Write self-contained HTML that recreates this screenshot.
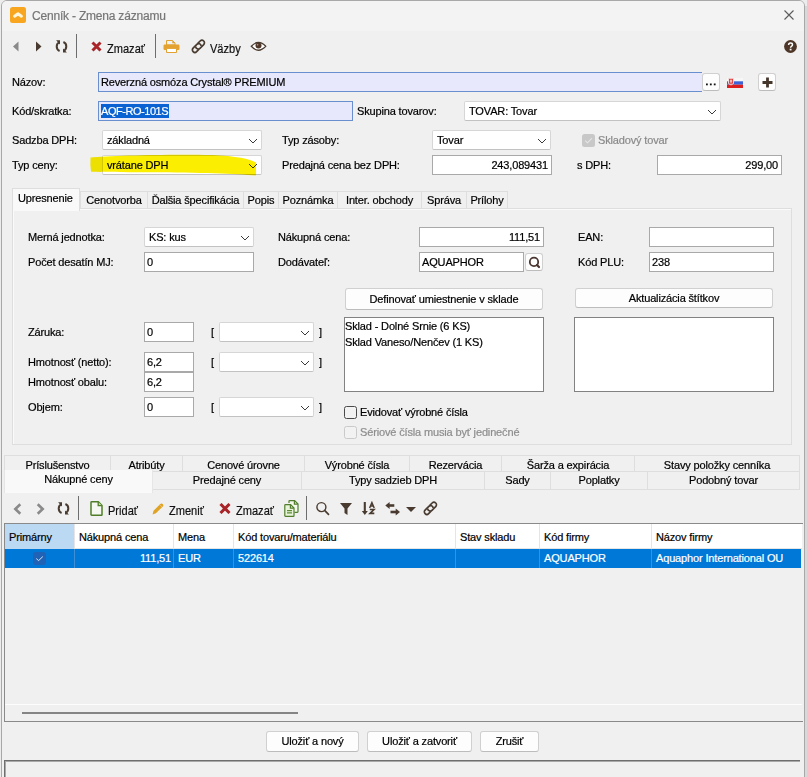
<!DOCTYPE html>
<html><head><meta charset="utf-8">
<style>
*{box-sizing:border-box;margin:0;padding:0}
html,body{width:807px;height:777px;overflow:hidden;background:#ececec}
body{position:relative;font-family:"Liberation Sans",sans-serif;font-size:11px;letter-spacing:-0.15px;color:#000;-webkit-text-stroke:0.2px currentColor}
.a{position:absolute}
.t{position:absolute;white-space:nowrap;line-height:13px}
.win{position:absolute;left:1px;top:0;width:804px;height:790px;background:#f0f0f0;border:1px solid #a8a8a8;border-radius:6px 6px 0 0;overflow:hidden}
.tbar{position:absolute;left:0;top:0;width:802px;height:30px;background:#f3f3f3}
.inp{position:absolute;background:#fff;border:1px solid #a9a9a9}
.cmb{position:absolute;background:#fff;border:1px solid #d6d6d6;border-bottom-color:#c2c2c2;border-radius:2px}
.cmb .t{left:4px;top:3px}
.chev{position:absolute;right:3px;top:6.5px}
.btn{position:absolute;background:#fdfdfd;border:1px solid #d0d0d0;border-bottom-color:#bcbcbc;border-radius:3px;text-align:center}
.tt{position:absolute;white-space:nowrap;line-height:13px;font-size:13px;letter-spacing:0;color:#111;transform:scaleX(0.85);transform-origin:0 0}
.sep{position:absolute;width:1px;background:#6d6d6d}
</style></head><body>
<div class="a" style="left:805px;top:6px;width:2px;height:771px;background:#d8d8d8"></div><div class="win"><div class="tbar"></div></div>

<!-- title -->
<div class="a" style="left:10px;top:7px;width:16px;height:16px;background:#f8a51f;border-radius:2.5px"></div>
<svg class="a" style="left:10px;top:7px" width="16" height="16"><path d="M4.6 9.2 L8 6.8 L11.4 9.2" fill="none" stroke="#fff7dc" stroke-width="3" stroke-linecap="round" stroke-linejoin="round"/></svg>
<div class="t" style="left:32px;top:10px;font-size:12px;letter-spacing:-0.2px;color:#767676">Cenník - Zmena záznamu</div>
<svg class="a" style="left:784px;top:10px" width="10" height="10"><path d="M0.5 0.5 L9.5 9.5 M9.5 0.5 L0.5 9.5" stroke="#5a5a5a" stroke-width="1.1"/></svg>

<!-- toolbar -->
<svg class="a" style="left:12px;top:41px" width="8" height="11"><path d="M6.5 0.5 L1 5.5 L6.5 10.5 Z" fill="#8a8a8a"/></svg>
<svg class="a" style="left:35px;top:41px" width="8" height="11"><path d="M1 0.5 L6.5 5.5 L1 10.5 Z" fill="#4a3b30"/></svg>
<svg class="a" style="left:55px;top:40px" width="13" height="13" viewBox="0 0 13 13"><g fill="none" stroke="#4a3b30" stroke-width="2"><path d="M4.6 2.2 A4.8 4.8 0 0 0 4.6 11"/><path d="M8.4 2 A4.8 4.8 0 0 1 8.4 10.8"/></g><path d="M1.1 0.2 H5 V4.4 Z M11.9 12.6 H8 V8.4 Z" fill="#4a3b30"/></svg>
<div class="sep" style="left:76px;top:34px;height:24px"></div>
<svg class="a" style="left:91px;top:41px" width="11" height="11"><path d="M1.5 1.5 L9.5 9.5 M9.5 1.5 L1.5 9.5" stroke="#a82428" stroke-width="3"/></svg>
<div class="tt" style="left:107px;top:41.7px">Zmazať</div>
<div class="sep" style="left:155px;top:34px;height:24px"></div>
<svg class="a" style="left:163px;top:39px" width="17" height="14"><path d="M3.5 1.5 H9.5 L12 4 V6 H3.5 Z" fill="#eef2f6" stroke="#e3a130" stroke-width="1"/><path d="M9.3 1.3 V4.2 H12.2Z" fill="#e3a130"/><rect x="0.5" y="5.6" width="16" height="5.4" rx="1.2" fill="#e3a130"/><path d="M3.5 9.4 H13.5 V13.5 H3.5 Z" fill="#fff" stroke="#e3a130" stroke-width="1"/></svg>
<svg class="a" style="left:190px;top:38px" width="17" height="17"><g fill="none" stroke="#4a3b30" stroke-width="1.7" stroke-linecap="butt" transform="translate(8.4 8.3) rotate(-45)"><path d="M1.6 -2.5 H5.0 A2.5 2.5 0 0 1 5.0 2.5 H-0.3 A2.5 2.5 0 0 1 -2.07 -1.77"/><path d="M-1.6 2.5 H-5.0 A2.5 2.5 0 0 1 -5.0 -2.5 H0.3 A2.5 2.5 0 0 1 2.07 1.77"/></g></svg>
<div class="tt" style="left:210px;top:41.7px">Väzby</div>
<svg class="a" style="left:250px;top:41px" width="17" height="11"><path d="M1.3 5.3 Q8.5 -2.6 15.7 5.3 Q8.5 13.2 1.3 5.3Z" fill="#fff" stroke="#4a3b30" stroke-width="1.3"/><circle cx="8.5" cy="4.6" r="3" fill="#4e3628"/><circle cx="7.6" cy="3.7" r="0.8" fill="#b49a88"/></svg>
<svg class="a" style="left:784px;top:40px" width="13" height="13"><circle cx="6.5" cy="6.5" r="6.4" fill="#4d3627"/><path d="M4.6 4.9 Q4.6 3 6.6 3 Q8.5 3 8.5 4.7 Q8.5 5.7 7.4 6.3 Q6.6 6.8 6.6 7.8" fill="none" stroke="#fff" stroke-width="1.5"/><rect x="5.7" y="8.7" width="1.8" height="1.7" fill="#fff"/></svg>

<!-- top form -->
<div class="t" style="left:12px;top:76px">Názov:</div>
<div class="a" style="left:98px;top:72px;width:604px;height:20px;background:#e8e8fc;border:1px solid #6a8fcf;border-right:none"></div>
<div class="t" style="left:101px;top:76px">Reverzná osmóza Crystal® PREMIUM</div>
<div class="btn" style="left:702px;top:73px;width:18px;height:18px"></div><svg class="a" style="left:705px;top:83px" width="12" height="3"><rect x="1" y="0.5" width="1.8" height="1.8" fill="#111"/><rect x="4.9" y="0.5" width="1.8" height="1.8" fill="#111"/><rect x="8.8" y="0.5" width="1.8" height="1.8" fill="#111"/></svg>
<svg class="a" style="left:727px;top:78px" width="16" height="10"><rect x="0" y="0" width="16" height="3.3" fill="#f6f6f6"/><rect x="0" y="3.3" width="16" height="3.4" fill="#3d62d8"/><rect x="0" y="6.7" width="16" height="3.3" fill="#dd1e1e"/><path d="M1.5 0.3 H6.5 V5.5 Q4 8.5 1.5 5.5Z" fill="#e23a3a" stroke="#f4e8e8" stroke-width="0.9"/><path d="M4 1.5 V5.5 M2.8 3 H5.2" stroke="#fff" stroke-width="0.8"/></svg>
<div class="btn" style="left:758px;top:73px;width:18px;height:18px"></div>
<svg class="a" style="left:762px;top:77px" width="11" height="11"><path d="M5.5 0.5 V10.5 M0.5 5.5 H10.5" stroke="#45362b" stroke-width="2.8"/></svg>

<div class="t" style="left:12px;top:105px">Kód/skratka:</div>
<div class="a" style="left:98px;top:101px;width:255px;height:20px;background:#e8e8fc;border:1px solid #6a8fcf"></div>
<div class="a" style="left:101px;top:104px;width:68px;height:14px;background:#0a62d2"></div>
<div class="t" style="left:101px;top:105px;color:#fff;letter-spacing:-0.45px">AQF-RO-101S</div>
<div class="t" style="left:357px;top:105px">Skupina tovarov:</div>
<div class="cmb" style="left:464px;top:101px;width:257px;height:20px"><div class="t">TOVAR: Tovar</div><svg class="chev" width="10" height="6"><path d="M1 1 L5 5 L9 1" fill="none" stroke="#3a3a3a" stroke-width="1"/></svg></div>

<div class="t" style="left:12px;top:134px">Sadzba DPH:</div>
<div class="cmb" style="left:102px;top:130px;width:160px;height:20px"><div class="t">základná</div><svg class="chev" width="10" height="6"><path d="M1 1 L5 5 L9 1" fill="none" stroke="#3a3a3a" stroke-width="1"/></svg></div>
<div class="t" style="left:282px;top:134px">Typ zásoby:</div>
<div class="cmb" style="left:432px;top:130px;width:119px;height:20px"><div class="t">Tovar</div><svg class="chev" width="10" height="6"><path d="M1 1 L5 5 L9 1" fill="none" stroke="#3a3a3a" stroke-width="1"/></svg></div>
<div class="a" style="left:582px;top:134px;width:13px;height:13px;background:#c8c8c8;border-radius:2.5px"></div>
<svg class="a" style="left:582px;top:134px" width="13" height="13"><path d="M3.2 6.6 L5.5 8.8 L9.8 4.3" fill="none" stroke="#e6e6e6" stroke-width="1.1"/></svg>
<div class="t" style="left:598px;top:134px;color:#8a8a8a">Skladový tovar</div>

<div class="t" style="left:12px;top:159px">Typ ceny:</div>
<div class="cmb" style="left:102px;top:155px;width:160px;height:20px"><div class="t">vrátane DPH</div><svg class="chev" width="10" height="6"><path d="M1 1 L5 5 L9 1" fill="none" stroke="#3a3a3a" stroke-width="1"/></svg></div>
<svg class="a" style="left:0;top:0;mix-blend-mode:multiply" width="300" height="200"><path d="M90.5 157.5 C110 155.5 170 154 212 155 C236 156 250 159 256 162.5 L256 175.5 C236 174 200 172.5 150 172.3 C120 172.2 100 172 91 171.8 Q90 165 90.5 157.5 Z" fill="#fbee00"/></svg>
<div class="t" style="left:282px;top:159px">Predajná cena bez DPH:</div>
<div class="inp" style="left:432px;top:155px;width:120px;height:20px"></div>
<div class="t" style="left:432px;top:159px;width:116px;text-align:right">243,089431</div>
<div class="t" style="left:577px;top:159px">s DPH:</div>
<div class="inp" style="left:657px;top:155px;width:125px;height:20px"></div>
<div class="t" style="left:657px;top:159px;width:121px;text-align:right">299,00</div>

<!-- tabs -->
<div class="a" style="left:12px;top:208px;width:780px;height:237px;border:1px solid #dedede;background:#f0f0f0;box-shadow:inset 1px 1px 0 #fafafa"></div>
<div class="a" style="left:80px;top:191px;width:68px;height:18px;border:1px solid #dedede;background:#f0f0f0"></div>
<div class="t" style="left:80px;top:193.7px;width:68px;text-align:center">Cenotvorba</div>
<div class="a" style="left:147px;top:191px;width:97px;height:18px;border:1px solid #dedede;background:#f0f0f0"></div>
<div class="t" style="left:147px;top:193.7px;width:97px;text-align:center">Ďalšia špecifikácia</div>
<div class="a" style="left:243px;top:191px;width:36px;height:18px;border:1px solid #dedede;background:#f0f0f0"></div>
<div class="t" style="left:243px;top:193.7px;width:36px;text-align:center">Popis</div>
<div class="a" style="left:278px;top:191px;width:60px;height:18px;border:1px solid #dedede;background:#f0f0f0"></div>
<div class="t" style="left:278px;top:193.7px;width:60px;text-align:center">Poznámka</div>
<div class="a" style="left:337px;top:191px;width:85px;height:18px;border:1px solid #dedede;background:#f0f0f0"></div>
<div class="t" style="left:337px;top:193.7px;width:85px;text-align:center">Inter. obchody</div>
<div class="a" style="left:421px;top:191px;width:46px;height:18px;border:1px solid #dedede;background:#f0f0f0"></div>
<div class="t" style="left:421px;top:193.7px;width:46px;text-align:center">Správa</div>
<div class="a" style="left:466px;top:191px;width:42px;height:18px;border:1px solid #dedede;background:#f0f0f0"></div>
<div class="t" style="left:466px;top:193.7px;width:42px;text-align:center">Prílohy</div>
<div class="a" style="left:12px;top:188px;width:68px;height:23px;border:1px solid #dedede;border-bottom:none;background:#f9f9f9"></div>
<div class="t" style="left:18px;top:191.7px;">Upresnenie</div>
<div class="t" style="left:28px;top:230.7px;">Merná jednotka:</div>
<div class="cmb" style="left:144px;top:227px;width:110px;height:20px"><div class="t">KS: kus</div><svg class="chev" width="10" height="6"><path d="M1 1 L5 5 L9 1" fill="none" stroke="#3a3a3a" stroke-width="1"/></svg></div>
<div class="t" style="left:28px;top:255.7px;">Počet desatín MJ:</div>
<div class="inp" style="left:144px;top:252px;width:110px;height:20px"></div>
<div class="t" style="left:147px;top:255.7px;">0</div>
<div class="t" style="left:278px;top:230.7px;">Nákupná cena:</div>
<div class="inp" style="left:419px;top:227px;width:125px;height:20px"></div>
<div class="t" style="left:419px;top:230.7px;width:121px;text-align:right">111,51</div>
<div class="t" style="left:278px;top:255.7px;">Dodávateľ:</div>
<div class="inp" style="left:419px;top:252px;width:105px;height:20px"></div>
<div class="t" style="left:422px;top:255.7px;">AQUAPHOR</div>
<div class="btn" style="left:525px;top:253px;width:18px;height:18px"></div>
<svg class="a" style="left:528px;top:256px" width="13" height="13"><circle cx="6" cy="5.9" r="4.2" fill="none" stroke="#4a3630" stroke-width="1.8"/><path d="M9 9 L11 11" stroke="#4a3630" stroke-width="2.2" stroke-linecap="round"/></svg>
<div class="t" style="left:578px;top:230.7px;">EAN:</div>
<div class="inp" style="left:649px;top:227px;width:125px;height:20px"></div>
<div class="t" style="left:578px;top:255.7px;">Kód PLU:</div>
<div class="inp" style="left:649px;top:252px;width:125px;height:20px"></div>
<div class="t" style="left:652px;top:255.7px;">238</div>
<div class="btn" style="left:345px;top:288px;width:198px;height:22px"></div>
<div class="t" style="left:345px;top:292.7px;width:198px;text-align:center">Definovať umiestnenie v sklade</div>
<div class="btn" style="left:575px;top:288px;width:198px;height:20px"></div>
<div class="t" style="left:575px;top:291.7px;width:198px;text-align:center">Aktualizácia štítkov</div>
<div class="inp" style="left:344px;top:317px;width:200px;height:75px;border-color:#828282"></div>
<div class="t" style="left:345px;top:319.7px;">Sklad - Dolné Srnie (6 KS)</div>
<div class="t" style="left:345px;top:335.7px;">Sklad Vaneso/Nenčev (1 KS)</div>
<div class="inp" style="left:574px;top:317px;width:200px;height:75px;border-color:#828282"></div>
<div class="t" style="left:28px;top:325.7px;">Záruka:</div>
<div class="inp" style="left:144px;top:322px;width:50px;height:20px"></div>
<div class="t" style="left:147px;top:325.7px;">0</div>
<div class="t" style="left:211px;top:325.7px;">[</div>
<div class="cmb" style="left:219px;top:322px;width:95px;height:20px"><svg class="chev" width="10" height="6"><path d="M1 1 L5 5 L9 1" fill="none" stroke="#3a3a3a" stroke-width="1"/></svg></div>
<div class="t" style="left:319px;top:325.7px;">]</div>
<div class="t" style="left:28px;top:355.7px;">Hmotnosť (netto):</div>
<div class="inp" style="left:144px;top:352px;width:50px;height:20px"></div>
<div class="t" style="left:147px;top:355.7px;">6,2</div>
<div class="t" style="left:211px;top:355.7px;">[</div>
<div class="cmb" style="left:219px;top:352px;width:95px;height:20px"><svg class="chev" width="10" height="6"><path d="M1 1 L5 5 L9 1" fill="none" stroke="#3a3a3a" stroke-width="1"/></svg></div>
<div class="t" style="left:319px;top:355.7px;">]</div>
<div class="t" style="left:28px;top:375.7px;">Hmotnosť obalu:</div>
<div class="inp" style="left:144px;top:372px;width:50px;height:20px"></div>
<div class="t" style="left:147px;top:375.7px;">6,2</div>
<div class="t" style="left:28px;top:400.7px;">Objem:</div>
<div class="inp" style="left:144px;top:397px;width:50px;height:20px"></div>
<div class="t" style="left:147px;top:400.7px;">0</div>
<div class="t" style="left:211px;top:400.7px;">[</div>
<div class="cmb" style="left:219px;top:397px;width:95px;height:20px"><svg class="chev" width="10" height="6"><path d="M1 1 L5 5 L9 1" fill="none" stroke="#3a3a3a" stroke-width="1"/></svg></div>
<div class="t" style="left:319px;top:400.7px;">]</div>
<div class="a" style="left:344px;top:406px;width:13px;height:13px;border:1px solid #4a4a4a;border-radius:2.5px;background:#f2f2f2"></div>
<div class="t" style="left:360px;top:405.7px;">Evidovať výrobné čísla</div>
<div class="a" style="left:344px;top:426px;width:13px;height:13px;border:1px solid #cacaca;border-radius:2.5px;background:#f2f2f2"></div>
<div class="t" style="left:360px;top:425.7px;color:#8d8d8d">Sériové čísla musia byť jedinečné</div>
<!-- lower tabs -->
<div class="a" style="left:4px;top:455px;width:107px;height:17px;border:1px solid #dedede;border-bottom:none;background:#f0f0f0"></div>
<div class="t" style="left:4px;top:459.2px;width:107px;text-align:center">Príslušenstvo</div>
<div class="a" style="left:110px;top:455px;width:73px;height:17px;border:1px solid #dedede;border-bottom:none;background:#f0f0f0"></div>
<div class="t" style="left:110px;top:459.2px;width:73px;text-align:center">Atribúty</div>
<div class="a" style="left:182px;top:455px;width:123px;height:17px;border:1px solid #dedede;border-bottom:none;background:#f0f0f0"></div>
<div class="t" style="left:182px;top:459.2px;width:123px;text-align:center">Cenové úrovne</div>
<div class="a" style="left:304px;top:455px;width:106px;height:17px;border:1px solid #dedede;border-bottom:none;background:#f0f0f0"></div>
<div class="t" style="left:304px;top:459.2px;width:106px;text-align:center">Výrobné čísla</div>
<div class="a" style="left:409px;top:455px;width:93px;height:17px;border:1px solid #dedede;border-bottom:none;background:#f0f0f0"></div>
<div class="t" style="left:409px;top:459.2px;width:93px;text-align:center">Rezervácia</div>
<div class="a" style="left:501px;top:455px;width:134px;height:17px;border:1px solid #dedede;border-bottom:none;background:#f0f0f0"></div>
<div class="t" style="left:501px;top:459.2px;width:134px;text-align:center">Šarža a expirácia</div>
<div class="a" style="left:634px;top:455px;width:166px;height:17px;border:1px solid #dedede;border-bottom:none;background:#f0f0f0"></div>
<div class="t" style="left:634px;top:459.2px;width:166px;text-align:center">Stavy položky cenníka</div>
<div class="a" style="left:152px;top:471px;width:150px;height:19px;border:1px solid #dedede;background:#f0f0f0"></div>
<div class="t" style="left:152px;top:473.7px;width:150px;text-align:center">Predajné ceny</div>
<div class="a" style="left:301px;top:471px;width:184px;height:19px;border:1px solid #dedede;background:#f0f0f0"></div>
<div class="t" style="left:301px;top:473.7px;width:184px;text-align:center">Typy sadzieb DPH</div>
<div class="a" style="left:484px;top:471px;width:67px;height:19px;border:1px solid #dedede;background:#f0f0f0"></div>
<div class="t" style="left:484px;top:473.7px;width:67px;text-align:center">Sady</div>
<div class="a" style="left:550px;top:471px;width:98px;height:19px;border:1px solid #dedede;background:#f0f0f0"></div>
<div class="t" style="left:550px;top:473.7px;width:98px;text-align:center">Poplatky</div>
<div class="a" style="left:647px;top:471px;width:153px;height:19px;border:1px solid #dedede;background:#f0f0f0"></div>
<div class="t" style="left:647px;top:473.7px;width:153px;text-align:center">Podobný tovar</div>
<div class="a" style="left:4px;top:470px;width:149px;height:23px;border:1px solid #e6e6e6;border-bottom:none;border-top:none;background:#f9f9f9"></div>
<div class="t" style="left:4px;top:472.7px;width:149px;text-align:center">Nákupné ceny</div>
<svg class="a" style="left:13px;top:503px" width="9" height="12"><path d="M7.3 1.2 L2.3 6 L7.3 10.8" fill="none" stroke="#8a8a8a" stroke-width="2.6"/></svg>
<svg class="a" style="left:36px;top:503px" width="9" height="12"><path d="M1.7 1.2 L6.7 6 L1.7 10.8" fill="none" stroke="#8a8a8a" stroke-width="2.6"/></svg>
<svg class="a" style="left:57px;top:502px" width="13" height="13" viewBox="0 0 13 13"><g fill="none" stroke="#4a3b30" stroke-width="2"><path d="M4.6 2.2 A4.8 4.8 0 0 0 4.6 11"/><path d="M8.4 2 A4.8 4.8 0 0 1 8.4 10.8"/></g><path d="M1.1 0.2 H5 V4.4 Z M11.9 12.6 H8 V8.4 Z" fill="#4a3b30"/></svg>
<div class="sep" style="left:78px;top:496px;height:24px"></div>
<svg class="a" style="left:90px;top:501px" width="13" height="15"><path d="M1.6 0.8 H8.3 L12 4.5 V13.7 Q12 14.2 11.5 14.2 H1.6 Q1 14.2 1 13.6 V1.4 Q1 0.8 1.6 0.8Z" fill="#f4f8f0" stroke="#4f7d28" stroke-width="1.5"/><path d="M8.2 1 V4.6 H11.8" fill="#c9e6a8" stroke="#4f7d28" stroke-width="1.3"/></svg>
<div class="tt" style="left:108px;top:503.8px">Pridať</div>
<svg class="a" style="left:152px;top:503px" width="12" height="12"><path d="M0.6 11.4 L1.5 7.8 L8.3 1 Q9.5 -0.1 10.7 1.1 Q11.9 2.3 10.8 3.5 L3.9 10.2 Z" fill="#e0a325"/><path d="M7.6 1.7 L10.1 4.2" stroke="#f6d58a" stroke-width="0.6"/></svg>
<div class="tt" style="left:169px;top:503.8px">Zmeniť</div>
<svg class="a" style="left:219px;top:503px" width="12" height="11"><path d="M1.5 1 L10.5 10 M10.5 1 L1.5 10" stroke="#a82428" stroke-width="3"/></svg>
<div class="tt" style="left:236px;top:503.8px">Zmazať</div>
<svg class="a" style="left:284px;top:500px" width="16" height="17"><path d="M5 3 V1.3 Q5 0.6 5.7 0.6 H10.6 L14 4 V11.6 Q14 12.3 13.3 12.3 H10.5" fill="#f2f8ea" stroke="#517d2c" stroke-width="1.2"/><path d="M10.4 0.8 V4.2 H13.8" fill="none" stroke="#517d2c" stroke-width="1.2"/><path d="M1.5 4.6 H6.6 L10 8 V15.7 Q10 16.3 9.3 16.3 H1.5 Q0.8 16.3 0.8 15.6 V5.3 Q0.8 4.6 1.5 4.6Z" fill="#e8f4da" stroke="#517d2c" stroke-width="1.2"/><path d="M6.4 4.8 V8.2 H9.8" fill="none" stroke="#517d2c" stroke-width="1.2"/><path d="M3 10.6 H8 M3 12.9 H8" stroke="#5d8a35" stroke-width="1.1"/></svg>
<div class="sep" style="left:306px;top:496px;height:24px"></div>
<svg class="a" style="left:315px;top:501px" width="15" height="15"><circle cx="6.4" cy="6.1" r="4.5" fill="none" stroke="#4a3b30" stroke-width="1.4"/><path d="M9.6 9.4 L13.5 13.3" stroke="#4a3b30" stroke-width="1.7" stroke-linecap="round"/></svg>
<svg class="a" style="left:339.5px;top:502.5px" width="12" height="12"><path d="M0 0 H12 L7.5 5.5 V12 L4.5 10 V5.5 Z" fill="#4a3b30"/></svg>
<svg class="a" style="left:361px;top:501px" width="15" height="15"><path d="M3.8 1 V11" stroke="#4a3b30" stroke-width="2.1"/><path d="M0.8 10 H6.8 L3.8 14Z" fill="#4a3b30"/><path d="M8.6 7 L10.9 1.6 L13.2 7 M9.5 5.1 H12.3" fill="none" stroke="#4a3b30" stroke-width="1.5"/><path d="M8.8 8.5 H13 L9 12.4 H13.3" fill="none" stroke="#4a3b30" stroke-width="1.6"/></svg>
<svg class="a" style="left:385px;top:502px" width="16" height="14"><path d="M3 3.5 H9.3" stroke="#4a3b30" stroke-width="2.6"/><path d="M0.3 3.5 L4.6 0 V7Z" fill="#4a3b30"/><path d="M5.5 10 H11.5" stroke="#4a3b30" stroke-width="2.6"/><path d="M15 10 L10.7 6.5 V13.5Z" fill="#4a3b30"/></svg>
<svg class="a" style="left:406px;top:507px" width="10" height="5"><path d="M0 0 H10 L5 5Z" fill="#4a3b30"/></svg>
<svg class="a" style="left:422px;top:500px" width="17" height="17"><g fill="none" stroke="#4a3b30" stroke-width="1.7" stroke-linecap="butt" transform="translate(8.4 8.3) rotate(-45)"><path d="M1.6 -2.5 H5.0 A2.5 2.5 0 0 1 5.0 2.5 H-0.3 A2.5 2.5 0 0 1 -2.07 -1.77"/><path d="M-1.6 2.5 H-5.0 A2.5 2.5 0 0 1 -5.0 -2.5 H0.3 A2.5 2.5 0 0 1 2.07 1.77"/></g></svg>
<div class="a" style="left:4px;top:523px;width:799px;height:199px;border:1px solid #8a8a8a;border-right:none;background:#f0f0f0"></div>
<div class="a" style="left:5px;top:524px;width:797px;height:25px;background:#fff;border-bottom:1px solid #e5e5e5"></div>
<div class="a" style="left:5px;top:524px;width:69px;height:25px;background:#bcd9f3"></div>
<div class="a" style="left:74px;top:524px;width:1px;height:25px;background:#e5e5e5"></div>
<div class="a" style="left:173px;top:524px;width:1px;height:25px;background:#e5e5e5"></div>
<div class="a" style="left:233px;top:524px;width:1px;height:25px;background:#e5e5e5"></div>
<div class="a" style="left:455px;top:524px;width:1px;height:25px;background:#e5e5e5"></div>
<div class="a" style="left:539px;top:524px;width:1px;height:25px;background:#e5e5e5"></div>
<div class="a" style="left:651px;top:524px;width:1px;height:25px;background:#e5e5e5"></div>
<div class="t" style="left:9px;top:530.7px;">Primárny</div>
<div class="t" style="left:79px;top:530.7px;">Nákupná cena</div>
<div class="t" style="left:178px;top:530.7px;">Mena</div>
<div class="t" style="left:238px;top:530.7px;">Kód tovaru/materiálu</div>
<div class="t" style="left:460px;top:530.7px;">Stav skladu</div>
<div class="t" style="left:544px;top:530.7px;">Kód firmy</div>
<div class="t" style="left:656px;top:530.7px;">Názov firmy</div>
<div class="a" style="left:5px;top:549px;width:796px;height:19px;background:#0078d7"></div>
<div class="a" style="left:74px;top:549px;width:1px;height:19px;background:#3d8fd6"></div>
<div class="a" style="left:173px;top:549px;width:1px;height:19px;background:#3d8fd6"></div>
<div class="a" style="left:233px;top:549px;width:1px;height:19px;background:#3d8fd6"></div>
<div class="a" style="left:455px;top:549px;width:1px;height:19px;background:#3d8fd6"></div>
<div class="a" style="left:539px;top:549px;width:1px;height:19px;background:#3d8fd6"></div>
<div class="a" style="left:651px;top:549px;width:1px;height:19px;background:#3d8fd6"></div>
<div class="a" style="left:33px;top:552px;width:13px;height:13px;background:#1f62b6;border-radius:3px"></div>
<svg class="a" style="left:33px;top:552px" width="13" height="13"><path d="M3.3 6.6 L5.6 8.6 L9.8 4.6" fill="none" stroke="#d8e8f8" stroke-width="1"/></svg>
<div class="t" style="left:74px;top:552.2px;width:97px;text-align:right;color:#fff">111,51</div>
<div class="t" style="left:178px;top:552.2px;color:#fff">EUR</div>
<div class="t" style="left:238px;top:552.2px;color:#fff">522614</div>
<div class="t" style="left:544px;top:552.2px;color:#fff">AQUAPHOR</div>
<div class="t" style="left:656px;top:552.2px;color:#fff">Aquaphor International OU</div>
<div class="a" style="left:5px;top:704px;width:797px;height:1px;background:#fdfdfd"></div>
<div class="a" style="left:22px;top:712px;width:276px;height:2px;background:#858585"></div>
<div class="btn" style="left:266px;top:731px;width:93px;height:21px"></div>
<div class="t" style="left:266px;top:735.2px;width:93px;text-align:center">Uložiť a nový</div>
<div class="btn" style="left:367px;top:731px;width:105px;height:21px"></div>
<div class="t" style="left:367px;top:735.2px;width:105px;text-align:center">Uložiť a zatvoriť</div>
<div class="btn" style="left:480px;top:731px;width:59px;height:21px"></div>
<div class="t" style="left:480px;top:735.2px;width:59px;text-align:center">Zrušiť</div>
<div class="a" style="left:4px;top:760px;width:796px;height:30px;border-top:1px solid #6e6e6e;border-left:1px solid #6e6e6e;box-shadow:inset 1px 1px 0 #a9a9a9;background:#f0f0f0"></div>

</body></html>
